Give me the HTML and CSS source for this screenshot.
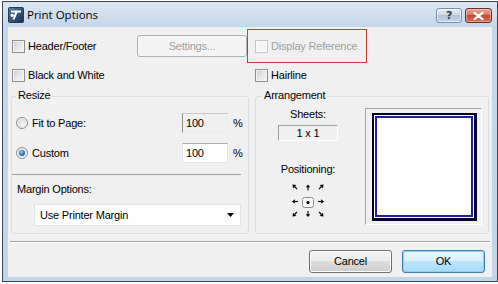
FILE: index.html
```html
<!DOCTYPE html>
<html>
<head>
<meta charset="utf-8">
<title>Print Options</title>
<link rel="stylesheet" href="styles.css">
</head>
<body>
<div class="window">
  <div class="titlebar">
    <svg class="app-icon" width="16" height="16" viewBox="0 0 16 16">
      <defs>
        <linearGradient id="ig" x1="0" y1="0" x2="1" y2="1">
          <stop offset="0" stop-color="#5b7f9e"/>
          <stop offset="1" stop-color="#13324f"/>
        </linearGradient>
      </defs>
      <rect x="0.5" y="0.5" width="15" height="15" rx="1" fill="url(#ig)" stroke="#243c55"/>
      <polygon points="3,3.5 13,3.5 13,5.5 9.5,5.5 6.5,12.5 4.5,12.5 7.2,5.5 3,5.5" fill="#fff"/>
      <circle cx="4.2" cy="8.3" r="1.6" fill="#fff"/>
    </svg>
    <span class="title">Print Options</span>
    <div class="caption">
      <div class="cap-btn help">?</div>
      <div class="cap-btn close">
        <svg width="11" height="8" viewBox="0 0 11 8"><path d="M1.5 0.8 L9.5 7.2 M9.5 0.8 L1.5 7.2" stroke="#fff" stroke-width="2.2" stroke-linecap="round"/></svg>
      </div>
    </div>
  </div>
  <div class="client">
    <div class="row row1">
      <label class="check w-header"><span class="box"></span><span>Header/Footer</span></label>
      <div class="btn settings disabled">Settings...</div>
      <div class="highlight">
        <label class="check disabled"><span class="box"></span><span>Display Reference</span></label>
      </div>
    </div>
    <div class="row row2">
      <label class="check w-bw"><span class="box"></span><span>Black and White</span></label>
      <label class="check"><span class="box"></span><span>Hairline</span></label>
    </div>
    <div class="groups">
      <div class="group resize">
        <span class="legend">Resize</span>
        <div class="radio-row">
          <span class="radio"></span>
          <span class="rlabel">Fit to Page:</span>
          <span class="field field-disabled">100</span>
          <span class="pct">%</span>
        </div>
        <div class="radio-row">
          <span class="radio checked"></span>
          <span class="rlabel">Custom</span>
          <span class="field">100</span>
          <span class="pct">%</span>
        </div>
        <div class="gsep"></div>
        <div class="mlabel">Margin Options:</div>
        <div class="dropdown">
          <span>Use Printer Margin</span>
          <svg width="7" height="4" viewBox="0 0 7 4"><polygon points="0,0 7,0 3.5,4" fill="#000"/></svg>
        </div>
      </div>
      <div class="group arrangement">
        <span class="legend legend-arr">Arrangement</span>
        <div class="arr-left">
          <div class="label">Sheets:</div>
          <div class="sheets-box">1 x 1</div>
          <div class="label pos-label">Positioning:</div>
          <svg class="pos-grid" width="36" height="36" viewBox="0 0 36 36">
            <g fill="#000" stroke="#000" stroke-width="1.1">
              <polygon points="18,1.5 15.8,4.3 20.2,4.3" stroke="none"/>
              <line x1="18" y1="4" x2="18" y2="7.5"/>
              <polygon points="18,34 15.8,31.2 20.2,31.2" stroke="none"/>
              <line x1="18" y1="28" x2="18" y2="31.5"/>
              <polygon points="2,18.5 4.8,16.3 4.8,20.7" stroke="none"/>
              <line x1="4.5" y1="18.5" x2="8" y2="18.5"/>
              <polygon points="34,18.5 31.2,16.3 31.2,20.7" stroke="none"/>
              <line x1="28" y1="18.5" x2="31.5" y2="18.5"/>
              <polygon points="2.5,1.5 6.3,2 3,5.3" stroke="none"/>
              <line x1="4" y1="3" x2="7" y2="6"/>
              <polygon points="33.5,1.5 29.7,2 33,5.3" stroke="none"/>
              <line x1="32" y1="3" x2="29" y2="6"/>
              <polygon points="2.5,33.5 3,29.7 6.3,33" stroke="none"/>
              <line x1="4" y1="32" x2="7" y2="29"/>
              <polygon points="33.5,33.5 33,29.7 29.7,33" stroke="none"/>
              <line x1="32" y1="32" x2="29" y2="29"/>
            </g>
            <rect x="12.5" y="14.5" width="11" height="10" rx="2" fill="#f7f7f7" stroke="#8c8c8c"/>
            <circle cx="18" cy="19.5" r="1.6" fill="#000"/>
          </svg>
        </div>
        <div class="preview">
          <div class="page"><div class="page-inner"></div></div>
        </div>
      </div>
    </div>
    <div class="dsep"></div>
    <div class="buttons">
      <div class="btn">Cancel</div>
      <div class="btn default">OK</div>
    </div>
  </div>
</div>
</body>
</html>
```
FILE: styles.css
```css
* { box-sizing: border-box; }

body {
  margin: 0;
  background: #fff;
  font-family: "Liberation Sans", Arial, sans-serif;
  font-size: 11px;
  letter-spacing: -0.2px;
  color: #000;
}

.window {
  margin: 1px 0 0 2px;
  width: 496px;
  height: 281px;
  border: 1px solid #3a4858;
  padding: 0 5px 4px;
  background: linear-gradient(to bottom, #dbe6f2 0, #c6d7eb 25px, #c3d5e9 100%);
}

.titlebar {
  display: flex;
  align-items: flex-start;
  height: 25px;
}

.app-icon {
  margin-top: 5px;
  flex: none;
}

.title {
  margin-left: 3px;
  margin-top: 5px;
  font-family: "Open Sans", "Liberation Sans", sans-serif;
  font-size: 11.5px;
  letter-spacing: 0;
  line-height: 16px;
}

.caption {
  margin-left: auto;
  margin-top: 6px;
  display: flex;
  gap: 3px;
}

.cap-btn {
  height: 15px;
  border-radius: 3px;
  display: flex;
  align-items: center;
  justify-content: center;
}

.help {
  width: 26px;
  border: 1px solid #7890ab;
  background: linear-gradient(to bottom, #e3ecf6 0, #c9d8e9 50%, #b1c6dd 50%, #c2d4e8 100%);
  box-shadow: inset 0 0 0 1px rgba(255, 255, 255, 0.6);
  font-family: "DejaVu Sans", sans-serif;
  font-size: 11px;
  font-weight: bold;
  color: #2c3b4d;
  line-height: 13px;
}

.close {
  width: 27px;
  border: 1px solid #6a2c24;
  background: linear-gradient(to bottom, #e8a594 0, #d8735e 50%, #c44a33 50%, #d2735c 100%);
  box-shadow: inset 0 0 0 1px rgba(255, 220, 210, 0.5);
}

.client {
  background: #f0f0f0;
  height: 250px;
  padding-top: 2px;
  display: flex;
  flex-direction: column;
}

.row {
  display: flex;
  align-items: center;
  padding-left: 4px;
}

.row1 { height: 34px; }
.row2 { height: 24px; }

.check {
  display: flex;
  align-items: center;
  gap: 3px;
  line-height: 13px;
}

.box {
  width: 13px;
  height: 13px;
  flex: none;
  border: 1px solid #8e8f8f;
  background: linear-gradient(135deg, #c8cbcf 0, #e4e5e7 50%, #f8f8f8 100%);
  box-shadow: inset 0 0 0 1px #f4f4f4;
}

.check.disabled { color: #a0a0a0; }
.check.disabled .box {
  border-color: #c6c6c6;
  background: #f4f4f4;
  box-shadow: inset 0 0 0 1px #fafafa;
}

.w-header { width: 125px; }
.w-bw { width: 243px; }

.btn {
  width: 83px;
  height: 23px;
  border: 1px solid #707070;
  border-radius: 3px;
  background: linear-gradient(to bottom, #f2f2f2 0, #ebebeb 50%, #dddddd 50%, #cfcfcf 100%);
  box-shadow: inset 0 0 0 1px #fcfcfc;
  display: flex;
  align-items: center;
  justify-content: center;
  line-height: 13px;
}

.btn.settings {
  width: 110px;
  height: 22px;
}

.btn.disabled {
  border-color: #adb2b5;
  background: #f4f4f4;
  box-shadow: none;
  color: #a0a0a0;
}

.btn.default {
  border-color: #3c7fb1;
  background: linear-gradient(to bottom, #eaf6fd 0, #d9f0fc 50%, #bee6fd 50%, #a7d9f5 100%);
  box-shadow: inset 0 0 0 1px #8ed0f0;
}

.highlight {
  width: 120px;
  height: 34px;
  border: 1px solid #c83c3c;
  display: flex;
  align-items: center;
  padding-left: 7px;
}

.groups {
  display: flex;
  gap: 6px;
  margin-top: 9px;
  padding-left: 3px;
}

.group {
  position: relative;
  height: 138px;
  border: 1px solid #d5dfe5;
  border-radius: 3px;
}

.legend {
  position: absolute;
  top: -8px;
  left: 4px;
  padding: 0 2px;
  background: #f0f0f0;
  line-height: 13px;
}

.legend-arr { left: 6px; }

.resize {
  width: 238px;
  padding: 16px 0 7px;
}

.radio-row {
  display: flex;
  align-items: center;
  height: 20px;
  padding-left: 4px;
}

.radio-row + .radio-row { margin-top: 10px; }

.radio {
  width: 12px;
  height: 12px;
  flex: none;
  border-radius: 50%;
  border: 1px solid #8e8f8f;
  background: radial-gradient(circle at 60% 60%, #f6f6f6 0, #dcdcdc 60%, #c8c8c8 100%);
  box-shadow: inset 0 0 0 1px #f4f4f4;
  position: relative;
}

.radio.checked::after {
  content: "";
  position: absolute;
  left: 2px;
  top: 2px;
  width: 6px;
  height: 6px;
  border-radius: 50%;
  background: radial-gradient(circle at 40% 35%, #9fd3f7 0, #2b7ac0 50%, #0c3f73 100%);
}

.rlabel {
  width: 150px;
  margin-left: 4px;
  line-height: 13px;
}

.field {
  width: 46px;
  height: 20px;
  padding-left: 3px;
  line-height: 18px;
  background: #fff;
  border: 1px solid;
  border-color: #abadb3 #e2e3ea #e3e9ef #e2e3ea;
}

.field-disabled {
  background: #f0f0f0;
  border-color: #c8c8c8 #eaeaea #eaeaea #8f8f8f;
}

.pct {
  margin-left: 5px;
  line-height: 13px;
}

.gsep {
  margin: 11px 7px 0 0;
  height: 1px;
  background: #a0a0a0;
}

.mlabel {
  margin-top: 8px;
  padding-left: 5px;
  line-height: 13px;
}

.dropdown {
  margin: 8px 0 0 22px;
  width: 207px;
  height: 22px;
  background: #fff;
  border: 1px solid #e3e3e3;
  display: flex;
  align-items: center;
  justify-content: space-between;
  padding: 0 6px 0 5px;
  line-height: 13px;
}

.arrangement {
  width: 234px;
  display: flex;
  padding-top: 11px;
}

.arr-left {
  width: 104px;
  display: flex;
  flex-direction: column;
  align-items: center;
}

.label { line-height: 13px; }

.sheets-box {
  margin-top: 4px;
  width: 60px;
  height: 16px;
  border: 1px solid;
  border-color: #a0a0a0 #ffffff #ffffff #a0a0a0;
  background: #f0f0f0;
  text-align: center;
  line-height: 14px;
}

.pos-label { margin-top: 22px; }

.pos-grid { margin-top: 7px; }

.preview {
  margin-left: 5px;
  width: 117px;
  height: 117px;
  border: 1px solid;
  border-color: #a8a8a8 #ffffff #ffffff #a8a8a8;
  padding: 4px 0 0 6px;
}

.page {
  width: 105px;
  height: 108px;
  border: 2px solid #00002a;
  border-right-width: 3px;
  border-bottom-width: 3px;
  padding: 1px;
  background: #fff;
}

.page-inner {
  height: 100%;
  border: 2px solid #1c1cab;
  background: #fff;
}

.dsep {
  margin: 7px 2px 0;
  border-top: 1px solid #a0a0a0;
  border-bottom: 1px solid #fff;
}

.buttons {
  display: flex;
  justify-content: flex-end;
  gap: 10px;
  margin-top: 7px;
  padding-right: 7px;
}
```
